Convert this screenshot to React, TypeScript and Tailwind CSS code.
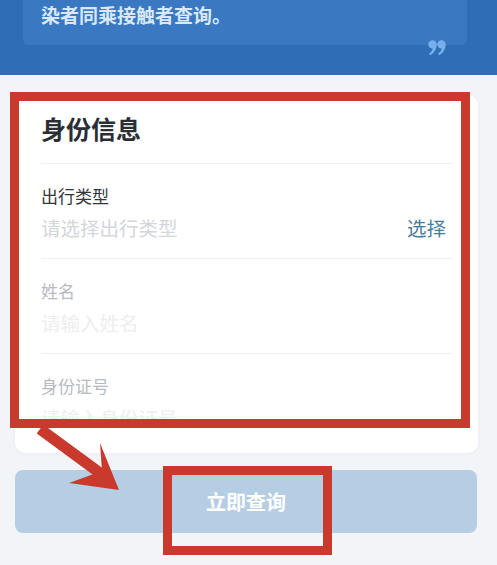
const cjk = { fontFamily: '"Noto Sans CJK SC", "Noto Sans", sans-serif' };

function QuoteMark() {
  return (
    <svg width="18" height="16" viewBox="0 0 18 16" fill="#78b0ec">
      <path d="M0.3 4.4a4.2 4.2 0 1 1 8.4 0c0 4.6-2.6 8.6-6.6 10.8l-1-1.6c2-1.4 3.3-3.2 3.7-5.1A4.2 4.2 0 0 1 0.3 4.4z" />
      <path d="M9.3 4.4a4.2 4.2 0 1 1 8.4 0c0 4.6-2.6 8.6-6.6 10.8l-1-1.6c2-1.4 3.3-3.2 3.7-5.1A4.2 4.2 0 0 1 9.3 4.4z" />
    </svg>
  );
}

function Field({ label, placeholder, labelColor, phColor, action }: {
  label: string;
  placeholder: string;
  labelColor: string;
  phColor: string;
  action?: string;
}) {
  return (
    <div className="pt-[20px] pb-[16px]">
      <div className={`text-[17px] leading-[24px] ${labelColor}`}>{label}</div>
      <div className="mt-[6px] flex items-center justify-between">
        <span className={`text-[19.5px] leading-[28px] ${phColor}`}>{placeholder}</span>
        {action && <span className="pr-[6px] text-[19.5px] leading-[28px] text-[#4a7c9e]">{action}</span>}
      </div>
    </div>
  );
}

export default function App() {
  return (
    <div className="relative h-[565px] w-[497px] overflow-hidden bg-[#f2f4f7]" style={cjk}>
      {/* top banner */}
      <div className="relative h-[75px] bg-[#2f6eb6]">
        <div className="mx-[23px] h-[45px] w-[444px] rounded-b-[6px] bg-[#3a79c1] pl-[18px]">
          <div className="text-[19px] font-bold leading-[30px] text-[#d9e8f8]">染者同乘接触者查询。</div>
        </div>
        <div className="absolute left-[428px] top-[40px]">
          <QuoteMark />
        </div>
      </div>

      {/* identity card */}
      <div className="ml-[15px] mt-[20px] w-[463px] rounded-[10px] bg-white px-[26px] shadow-[0_1px_4px_rgba(0,0,0,0.04)]">
        <div className="flex h-[68px] items-center text-[25px] font-bold text-[#2a2e35]">身份信息</div>
        <div className="border-t border-[#eef0f3]">
          <Field label="出行类型" placeholder="请选择出行类型" labelColor="text-[#33363b]" phColor="text-[#d3d6da]" action="选择" />
        </div>
        <div className="border-t border-[#eef0f3]">
          <Field label="姓名" placeholder="请输入姓名" labelColor="text-[#b7babf]" phColor="text-[#eceef0]" />
        </div>
        <div className="h-[100px] overflow-hidden border-t border-[#eef0f3]">
          <Field label="身份证号" placeholder="请输入身份证号" labelColor="text-[#b7babf]" phColor="text-[#eceef0]" />
        </div>
      </div>

      {/* submit */}
      <div className="ml-[15px] mt-[17px] flex h-[63px] w-[462px] items-center justify-center rounded-[8px] bg-[#b6cee4]">
        <span className="text-[20px] font-bold text-white">立即查询</span>
      </div>

      <div className="mt-[28px] text-center text-[14px] leading-[20px] text-[#d0d3d7]">
        数据来源：国家卫健委、中国国家铁路集团、中国民航局
      </div>

      {/* annotations */}
      <div className="absolute left-[10px] top-[92px] h-[336px] w-[460px] border-[9px] border-[#c93a2d]" />
      <div className="absolute left-[163px] top-[466px] h-[89px] w-[169px] border-[9px] border-[#c93a2d]" />
      <svg className="pointer-events-none absolute left-0 top-0" width="497" height="565">
        <line x1="40" y1="429" x2="104" y2="476" stroke="#c93a2d" strokeWidth="11" />
        <polygon points="119,490 100,443 102,471 69,483" fill="#c93a2d" />
      </svg>
    </div>
  );
}
